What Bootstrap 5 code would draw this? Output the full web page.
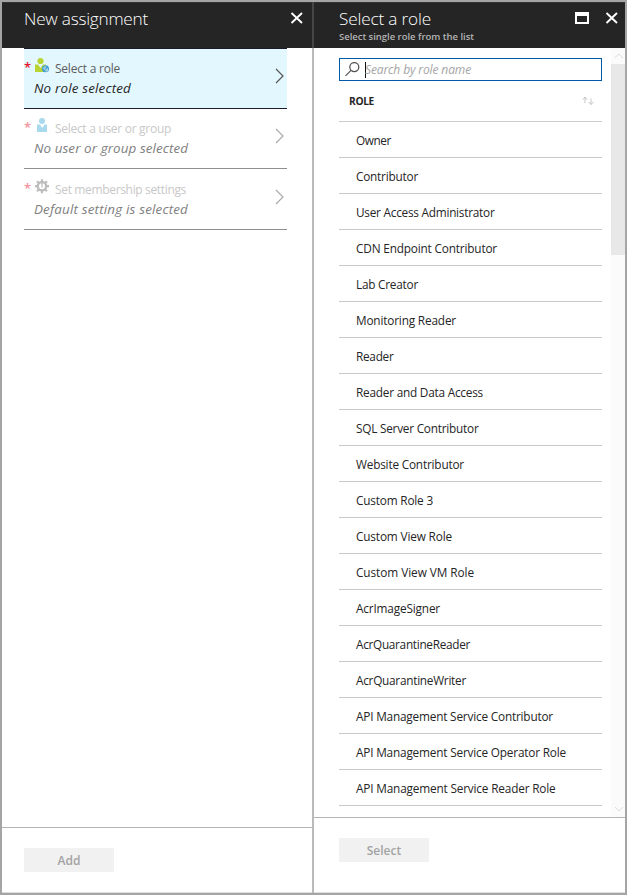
<!DOCTYPE html>
<html lang="en">
<head>
<meta charset="utf-8">
<meta name="viewport" content="width=device-width, initial-scale=1">
<title>New assignment</title>
<link href="https://cdn.jsdelivr.net/npm/bootstrap@5.3.0/dist/css/bootstrap.min.css" rel="stylesheet">
<style>
body{font-family:"Open Sans","Noto Sans",sans-serif;font-size:12px;line-height:16px;color:#252525;background:#fff}
.frame{width:627px;height:895px;border:2px solid #a5a5a5}
.blade-left{width:310px}
.divider{width:2px;background:#bababa}
.divider i{display:block;height:46px;background:#464646}
.blade-head{height:46px;background:#252525;color:#fff;border-top:1px solid #323232;flex:none}
.left-head{padding-left:22px}
.right-head{padding:0 6px 0 25px}
.blade-title{font-size:17.2px;line-height:24px;font-weight:300;padding-top:4px;white-space:nowrap}
.blade-sub{font-size:9.5px;line-height:12px;font-weight:600;color:#b4b4b4;white-space:nowrap}
.head-tools{gap:16px;padding-top:9px}
.head-tools svg+svg{margin-top:-1px}
.steps{padding:0 25px 0 22px}
.step{height:60px;border-bottom:1px solid #1b1b25;padding:10px 2px 0 0}
.step.tall{height:61px;padding-top:11px}
.step.active{background:#e3f7fe;height:61px;border-top:1px solid #1b1b25}
.step.locked{border-bottom-color:#8f8f8f}
.step.locked .step-label{color:#c8c8c8}
.step.locked .step-value{color:#808080}
.step.locked .star{color:#f3939d}
.star{width:10px;color:#e3172c;font-size:13px;line-height:16px;font-weight:600}
.step-icon{width:21px;height:18px;overflow:visible}
.step-label{color:#5d5d5d;font-size:12px;line-height:20px}
.step-value{font-size:13.4px;line-height:19px;font-style:italic;padding-left:10px}
.chevron{margin-top:9px}
.blade-foot{border-top:1px solid #b5b5b5;border-bottom:1px solid #ddd;flex:none}
.left-foot{height:66px;padding:20px 0 0 22px}
.right-foot{height:76px;padding:20px 0 0 25px}
.foot-btn.btn{width:90px;height:24px;padding:1px 0 0;border:0;border-radius:0;background:#f1f1f1;color:#a3a3a3;font-size:12px;font-weight:600;line-height:23px;opacity:1}
.right-body{padding-left:25px}
.search{height:23px;border:1px solid #0058a8;width:263px}
.search-text{font-size:12px;font-style:italic;color:#a5a5a5;line-height:20px;margin-left:-1px}
.lens{margin:0 4px 0 5px}
.caret{width:1px;height:16px;background:#111}
.roles{width:263px;padding-top:10px}
.role-head{height:41px;border-bottom:1px solid #ccc;font-size:10.2px;font-weight:700;padding:0 8px 0 10px}
.role-row{height:36px;border-bottom:1px solid #c8c8c8;padding:1px 0 0 17px;font-size:11.8px;white-space:nowrap}
.scroll{width:14px;background:#fbfbfb}
.thumb{height:191px;background:#e8e8e8}
</style>
<script src="https://cdn.jsdelivr.net/npm/bootstrap@5.3.0/dist/js/bootstrap.bundle.min.js"></script>
</head>
<body class="overflow-hidden">
<div class="frame d-flex">
  <section class="blade-left d-flex flex-column">
    <header class="blade-head left-head d-flex justify-content-between">
      <div class="blade-title"><span class="fit" data-w="124">New assignment</span></div>
      <svg class="mt-2 me-2" width="14" height="14" viewBox="0 0 14 14"><path d="M1.500 2l10.500 10M12 2L1.500 12" stroke="#fff" stroke-width="1.900" fill="none"/></svg>
    </header>
    <div class="flex-grow-1 steps">
      <div class="step active d-flex">
        <div class="flex-grow-1">
          <div class="d-flex">
            <span class="star">*</span>
            <svg class="step-icon" viewBox="0 0 21 18"><circle cx="6.500" cy="2" r="3.100" fill="#b8d432"/><path d="M1 5.500h3L6.500 9 9 5.500h3V13H1z" fill="#b8d432"/><circle cx="11.500" cy="9.700" r="3.500" fill="#3e9bd3"/><path d="M8.500 9l3-2.500 1 2-2 3z" fill="#8bc8df"/><path d="M11 11l3-2v3l-2 1z" fill="#a6d3df"/></svg>
            <span class="step-label"><span class="fit" data-w="65">Select a role</span></span>
          </div>
          <div class="step-value"><span class="fit" data-w="97">No role selected</span></div>
        </div>
        <svg class="chevron" width="10" height="16" viewBox="0 0 10 16"><path d="M1 1l7 7-7 7" fill="none" stroke="#555" stroke-width="1.200"/></svg>
      </div>
      <div class="step locked d-flex">
        <div class="flex-grow-1">
          <div class="d-flex">
            <span class="star">*</span>
            <svg class="step-icon" viewBox="0 0 21 18"><circle cx="8" cy="2" r="3" fill="#a9d9ec"/><path d="M3 5.500h3L8.200 9l2.300-3.500H13V13H3z" fill="#a9d9ec"/></svg>
            <span class="step-label"><span class="fit" data-w="116">Select a user or group</span></span>
          </div>
          <div class="step-value"><span class="fit" data-w="154">No user or group selected</span></div>
        </div>
        <svg class="chevron" width="10" height="16" viewBox="0 0 10 16"><path d="M1 1l7 7-7 7" fill="none" stroke="#aaa" stroke-width="1.200"/></svg>
      </div>
      <div class="step locked tall d-flex">
        <div class="flex-grow-1">
          <div class="d-flex">
            <span class="star">*</span>
            <svg class="step-icon" viewBox="0 0 21 18"><g fill="none" stroke="#bdbdbd"><circle cx="8" cy="6.200" r="4.200" stroke-width="2.400"/><path d="M8-.8v3M8 10.200v3M1 6.200h3M12 6.200h3M3 1.200l2 2M13 1.200l-2 2M3 11.200l2-2M13 11.200l-2-2" stroke-width="2.200"/><path d="M8 3v4.500" stroke-width="1.200"/></g></svg>
            <span class="step-label"><span class="fit" data-w="131">Set membership settings</span></span>
          </div>
          <div class="step-value"><span class="fit" data-w="154">Default setting is selected</span></div>
        </div>
        <svg class="chevron" width="10" height="16" viewBox="0 0 10 16"><path d="M1 1l7 7-7 7" fill="none" stroke="#aaa" stroke-width="1.200"/></svg>
      </div>
    </div>
    <footer class="blade-foot left-foot"><button class="btn foot-btn" disabled>Add</button></footer>
  </section>
  <div class="divider"><i></i></div>
  <section class="flex-grow-1 d-flex flex-column">
    <header class="blade-head right-head d-flex justify-content-between">
      <div>
        <div class="blade-title"><span class="fit" data-w="92">Select a role</span></div>
        <div class="blade-sub"><span class="fit" data-w="135">Select single role from the list</span></div>
      </div>
      <div class="d-flex head-tools">
        <svg width="14" height="12" viewBox="0 0 14 12"><path d="M0 0h14v12H0zM2 4v6h10V4z" fill="#fff" fill-rule="evenodd"/></svg>
        <svg width="14" height="14" viewBox="0 0 14 14"><path d="M1.500 2l10.500 10M12 2L1.500 12" stroke="#fff" stroke-width="1.900" fill="none"/></svg>
      </div>
    </header>
    <div class="d-flex flex-grow-1 justify-content-between right-body">
      <div class="roles">
        <div class="search d-flex align-items-center">
          <svg class="lens" width="16" height="16" viewBox="0 0 16 16"><g fill="none" stroke="#555" stroke-width="1.300"><circle cx="9.300" cy="5.100" r="4.500"/><path d="M6 8.400L.5 13.900"/></g></svg>
          <span class="caret"></span>
          <span class="search-text"><span class="fit" data-w="106">Search by role name</span></span>
        </div>
        <div class="role-head d-flex align-items-center justify-content-between">
          <span class="fit" data-w="25">ROLE</span>
          <svg width="12" height="10" viewBox="0 0 12 10"><path d="M3 7V1M.8 3.500L3 1l2.200 2.500M9 2.500v6M6.500 6L9 8.500 11.500 6" fill="none" stroke="#c4c4c4"/></svg>
        </div>
        <div id="rows"></div>
      </div>
      <div class="scroll d-flex flex-column">
        <svg width="14" height="16" viewBox="0 0 14 16"><path d="M3.500 10L8 6l4 4" fill="none" stroke="#ddd"/></svg>
        <div class="thumb"></div>
        <svg class="mt-auto" width="14" height="16" viewBox="0 0 14 16"><path d="M4 6l4 4 4-4" fill="none" stroke="#ddd"/></svg>
      </div>
    </div>
    <footer class="blade-foot right-foot"><button class="btn foot-btn" disabled>Select</button></footer>
  </section>
</div>
<script>
const roles=[["Owner",35],["Contributor",62],["User Access Administrator",138.5],["CDN Endpoint Contributor",141],["Lab Creator",62],["Monitoring Reader",100],["Reader",37.5],["Reader and Data Access",127],["SQL Server Contributor",122.5],["Website Contributor",108],["Custom Role 3",77],["Custom View Role",96],["Custom View VM Role",118],["AcrImageSigner",84],["AcrQuarantineReader",114],["AcrQuarantineWriter",110],["API Management Service Contributor",197],["API Management Service Operator Role",210],["API Management Service Reader Role",199.5]];
document.getElementById("rows").innerHTML=roles.map(([n,w])=>`<div class="role-row d-flex align-items-center"><span class="fit" data-w="${w}">${n}</span></div>`).join("");
document.querySelectorAll(".fit").forEach(e=>{
  const d=e.dataset.w-e.getBoundingClientRect().width;
  e.style.letterSpacing=(d/e.textContent.length)+"px";
});
</script>
</body>
</html>
